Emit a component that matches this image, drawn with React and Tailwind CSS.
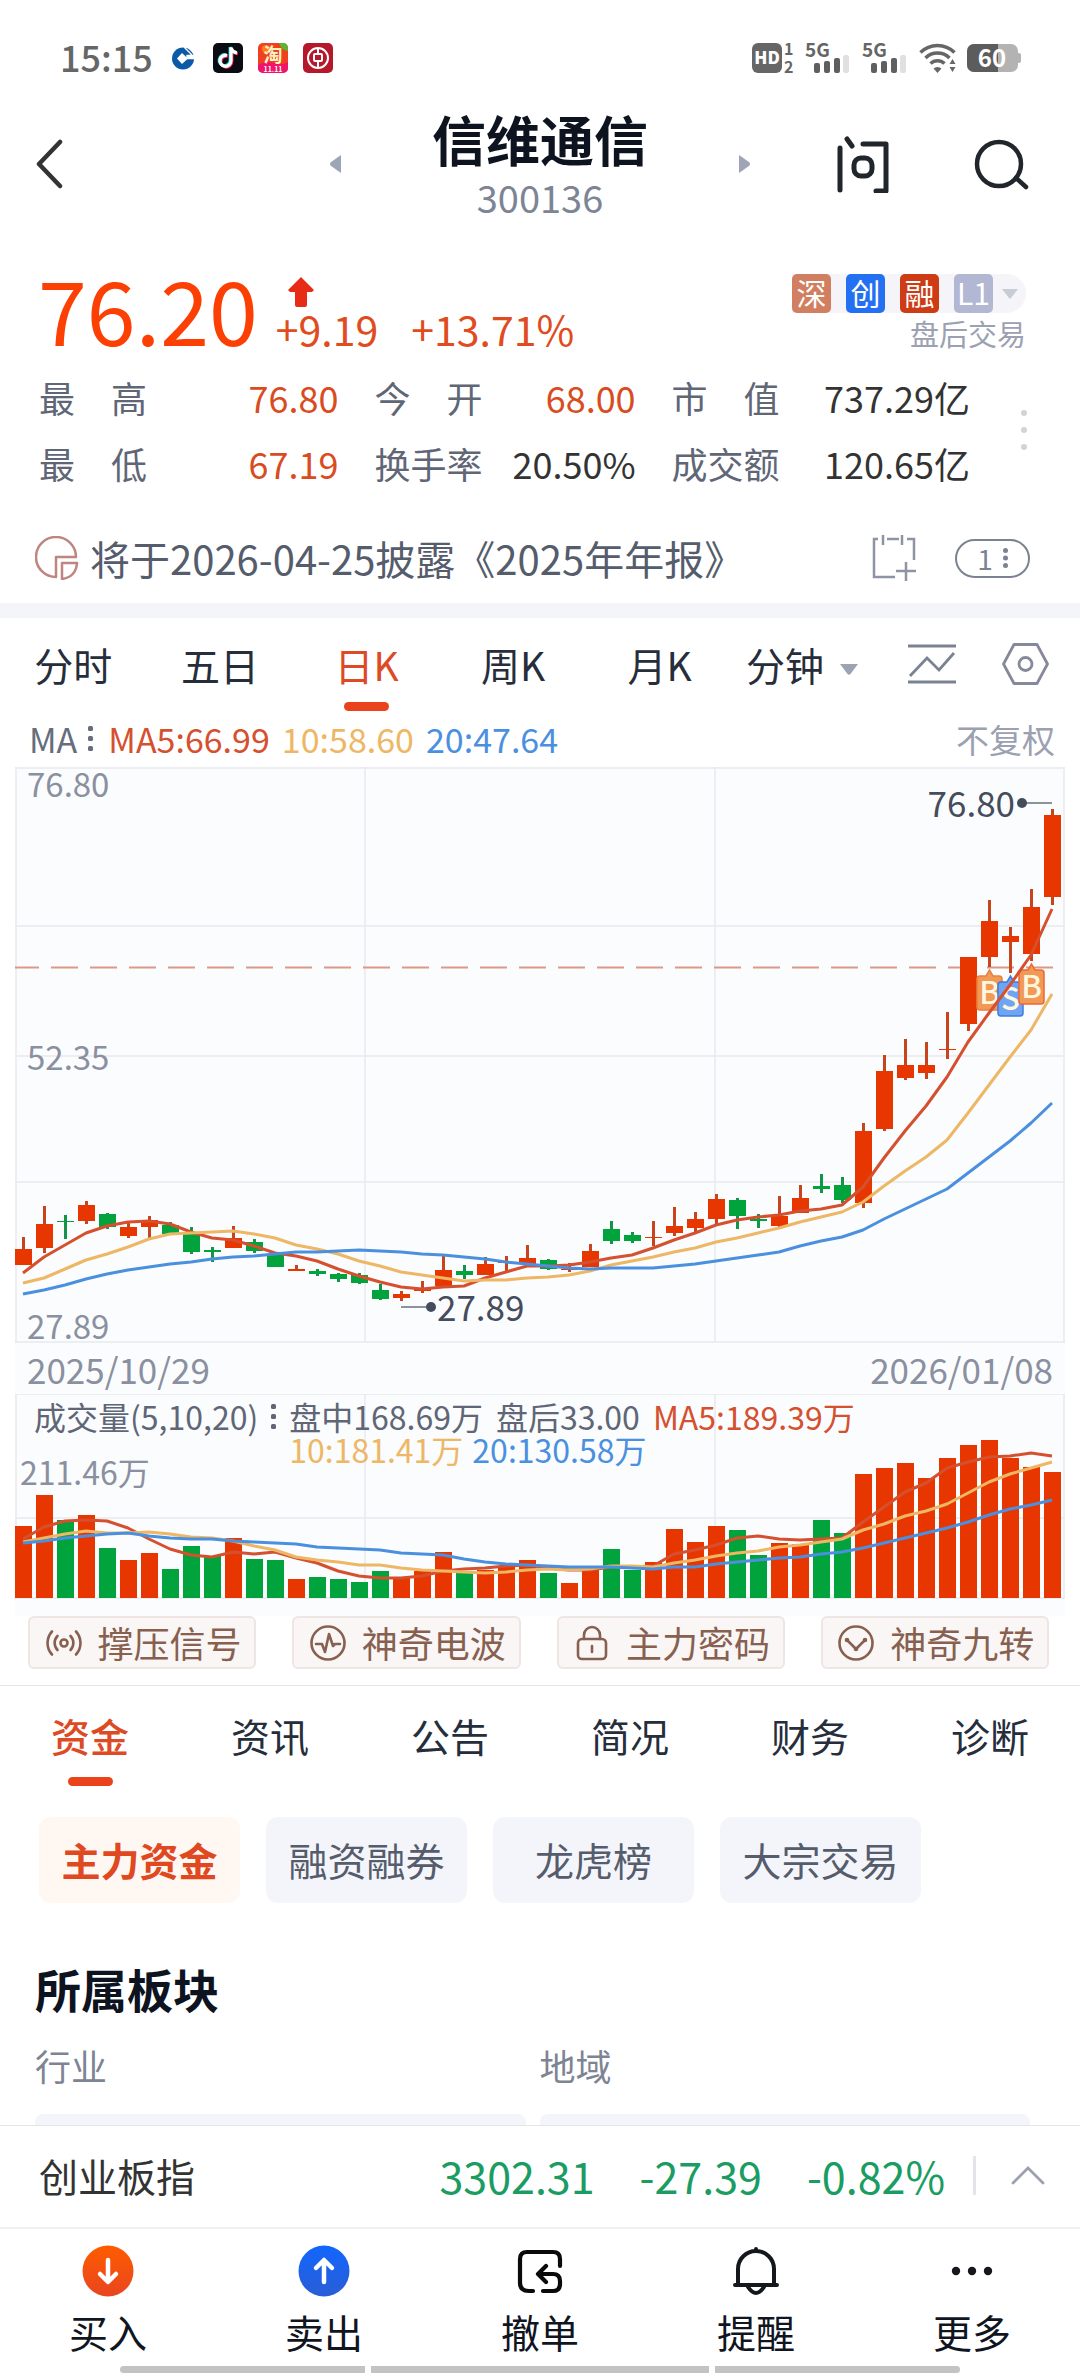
import React from "react";

const RED = "#e83600";
const GREEN = "#00a33c";
const STEP = 21;
const BODY = 17;

// One row per trading day: [rising, high, bodyTop, bodyBottom, low, volumeTop]
const DAYS = [
  [1, 470, 482, 498, 498, 132], [1, 439, 457, 481, 486, 101], [0, 448, 454, 455, 472, 126],
  [1, 434, 438, 454, 457, 121], [0, 446, 447, 460, 462, 154], [1, 455, 460, 469, 471, 166],
  [1, 449, 453, 460, 471, 159], [0, 455, 458, 467, 467, 175], [0, 460, 467, 485, 487, 152],
  [0, 480, 483, 485, 495, 162], [1, 459, 471, 481, 481, 144], [0, 472, 475, 484, 486, 165],
  [0, 487, 488, 500, 500, 166], [1, 498, 502, 504, 504, 185], [0, 502, 504, 507, 509, 183],
  [0, 506, 507, 512, 515, 185], [0, 506, 508, 516, 517, 188], [0, 517, 523, 532, 533, 177],
  [1, 524, 527, 531, 534, 184], [1, 514, 522, 524, 526, 177], [1, 489, 503, 519, 520, 158],
  [0, 498, 504, 508, 512, 179], [1, 490, 497, 508, 508, 176], [1, 489, 495, 496, 504, 173],
  [1, 478, 491, 497, 497, 166], [0, 492, 493, 502, 503, 179], [1, 496, 502, 503, 505, 189],
  [1, 477, 484, 500, 500, 176], [0, 454, 462, 474, 477, 155], [0, 465, 468, 474, 476, 176],
  [1, 454, 470, 471, 479, 168], [1, 440, 459, 466, 469, 135], [1, 445, 452, 461, 466, 148],
  [1, 427, 432, 452, 458, 132], [0, 431, 433, 449, 462, 136], [0, 447, 452, 454, 461, 161],
  [1, 429, 449, 459, 460, 149], [1, 418, 431, 446, 446, 150], [0, 407, 419, 422, 426, 126],
  [0, 410, 418, 433, 436, 139], [1, 356, 364, 436, 441, 80], [1, 288, 304, 362, 364, 74],
  [1, 272, 298, 311, 313, 69], [1, 275, 298, 306, 312, 84], [1, 245, 282, 283, 292, 64],
  [1, 190, 190, 257, 264, 51], [1, 133, 154, 190, 200, 46], [1, 160, 169, 175, 206, 64],
  [1, 122, 140, 187, 194, 73], [1, 42, 48, 130, 138, 78],
];

const PRICE_MA = {
  ma5: [506, 490, 478, 466, 459, 455, 454, 457, 465, 471, 473, 479, 486, 489, 494, 502, 509, 515, 520, 522, 520, 519, 511, 505, 499, 499, 498, 495, 491, 488, 481, 473, 466, 458, 453, 450, 448, 444, 442, 438, 420, 391, 364, 339, 310, 275, 246, 218, 188, 142],
  ma10: [516, 511, 502, 493, 487, 480, 472, 467, 466, 465, 464, 467, 471, 478, 482, 487, 494, 499, 505, 508, 511, 514, 513, 513, 511, 510, 508, 504, 498, 494, 490, 485, 481, 475, 471, 466, 461, 455, 450, 445, 435, 419, 404, 390, 373, 346, 318, 290, 263, 227],
  ma20: [527, 523, 518, 512, 507, 503, 500, 497, 495, 492, 490, 489, 487, 485, 485, 484, 483, 484, 485, 487, 488, 490, 492, 495, 497, 499, 501, 502, 501, 501, 501, 499, 497, 494, 491, 488, 485, 479, 474, 470, 463, 452, 442, 432, 422, 406, 390, 374, 356, 336],
};

const VOLUME_MA = {
  ma5: [145, 133, 127, 126, 127, 134, 145, 155, 161, 163, 158, 160, 158, 164, 169, 177, 182, 184, 184, 182, 177, 175, 174, 172, 171, 174, 176, 176, 173, 173, 172, 160, 156, 151, 144, 142, 145, 146, 145, 144, 128, 113, 98, 89, 74, 68, 63, 62, 59, 62],
  ma10: [148, 144, 140, 137, 139, 139, 138, 140, 143, 144, 147, 152, 156, 163, 166, 168, 171, 171, 174, 176, 177, 178, 179, 178, 176, 175, 176, 175, 172, 172, 173, 169, 166, 162, 159, 157, 153, 151, 148, 145, 136, 130, 122, 117, 110, 99, 88, 80, 74, 68],
  ma20: [149, 147, 144, 142, 140, 139, 142, 144, 145, 145, 147, 148, 149, 150, 153, 154, 155, 156, 159, 160, 161, 165, 168, 170, 171, 172, 173, 173, 173, 174, 175, 173, 173, 170, 168, 166, 164, 163, 160, 158, 154, 149, 144, 139, 134, 128, 121, 115, 111, 106],
};

function AverageLines({ data }) {
  const path = (ys) => ys.map((y, i) => `${8 + i * STEP},${y}`).join(" ");
  return (
    <g fill="none" strokeWidth="3" strokeLinejoin="round">
      <polyline points={path(data.ma5)} stroke="#d5502f" />
      <polyline points={path(data.ma10)} stroke="#edb765" />
      <polyline points={path(data.ma20)} stroke="#4a90df" />
    </g>
  );
}

function TradeMark({ x, y, letter, fill, edge }) {
  return (
    <g>
      <path d={`M${x + 3} ${y}h6l3.5-6 3.5 6h6a3 3 0 0 1 3 3v28a3 3 0 0 1-3 3h-19a3 3 0 0 1-3-3v-28a3 3 0 0 1 3-3z`} fill={fill} stroke={edge} strokeWidth="1.5" />
      <text x={x + 12.5} y={y + 28} fontSize="31" fontWeight="500" fill="#fff6df" textAnchor="middle">{letter}</text>
    </g>
  );
}

function PriceChart() {
  return (
    <svg viewBox="0 0 1050 576" className="block w-full bg-[#fbfcfe]" role="img" aria-label="日K线图">
      <g stroke="#e8eaee" strokeWidth="1.5">
        {[1, 159, 289, 415, 575].map((y) => <line key={y} x1="0" x2="1050" y1={y} y2={y} />)}
        {[1, 350, 700, 1049].map((x) => <line key={x} x1={x} x2={x} y1="0" y2="576" />)}
      </g>
      <line x1="-3" x2="1038" y1="200.5" y2="200.5" stroke="#dc9a84" strokeWidth="2" strokeDasharray="27 12" />
      <g fontSize="33" fill="#8a90a0">
        <text x="12" y="30">76.80</text>
        <text x="12" y="303">52.35</text>
        <text x="12" y="572">27.89</text>
      </g>
      {DAYS.map(([up, high, top, bottom, low], i) => (
        <g key={i} fill={up ? RED : GREEN}>
          <rect x={i * STEP + 7} y={high} width="3" height={low - high} fill={up ? "#c8441c" : "#149448"} />
          <rect x={i * STEP} y={top} width={BODY} height={bottom - top} />
        </g>
      ))}
      <TradeMark x={962} y={209} letter="B" fill="#f09a56" edge="#e8813e" />
      <TradeMark x={983} y={215} letter="S" fill="#6fa4f5" edge="#3f7bdd" />
      <TradeMark x={1004} y={203} letter="B" fill="#f09a56" edge="#ec6a35" />
      <AverageLines data={PRICE_MA} />
      <g fill="#454c5c" fontSize="35">
        <line x1="1007" x2="1037" y1="36" y2="36" stroke="#8d929c" strokeWidth="2" />
        <circle cx="1007" cy="36" r="5" />
        <text x="1000" y="50" textAnchor="end">76.80</text>
        <line x1="386" x2="415" y1="540" y2="540" stroke="#8d929c" strokeWidth="2" />
        <circle cx="416" cy="540" r="5" />
        <text x="422" y="554">27.89</text>
      </g>
    </svg>
  );
}

function VolumeChart() {
  return (
    <svg viewBox="0 0 1050 222" className="block w-full bg-[#fbfcfe]" role="img" aria-label="成交量图">
      <g stroke="#e8eaee" strokeWidth="1.5">
        {[0, 124, 204].map((y) => <line key={y} x1="0" x2="1050" y1={y} y2={y} />)}
        {[1, 350, 700, 1049].map((x) => <line key={x} x1={x} x2={x} y1="0" y2="204" />)}
      </g>
      <text x="5" y="91" fontSize="32" fill="#8a90a0">211.46万</text>
      {DAYS.map((d, i) => (
        <rect key={i} x={i * STEP} y={d[5]} width={BODY} height={204 - d[5]} fill={d[0] ? RED : GREEN} />
      ))}
      <AverageLines data={VOLUME_MA} />
    </svg>
  );
}

function Dots({ className = "" }) {
  return (
    <svg viewBox="0 0 6 26" className={`h-[26px] w-[6px] shrink-0 ${className}`} fill="currentColor" aria-hidden="true">
      <rect y="0" width="5" height="5" rx="1.5" /><rect y="10" width="5" height="5" rx="1.5" /><rect y="20" width="5" height="5" rx="1.5" />
    </svg>
  );
}

function Signal() {
  return (
    <svg viewBox="0 0 46 34" className="h-[34px] w-[46px] overflow-visible" aria-hidden="true">
      <text x="0" y="16" fontSize="19" fontWeight="700" fill="#666">5G</text>
      <g fill="#5f5f5f">
        <rect x="9" y="22" width="6" height="10" rx="2" />
        <rect x="19" y="20" width="6" height="12" rx="2" />
        <rect x="29" y="17" width="6" height="15" rx="2" />
      </g>
      <rect x="38" y="14" width="6" height="18" rx="2" fill="#e0e0e0" />
    </svg>
  );
}

function StatusBar() {
  return (
    <div className="flex items-center justify-between pt-[39px] pr-[58px] pl-[60px]">
      <div className="flex items-center">
        <span className="mr-[18px] pb-[4px] text-[36px] leading-[34px] font-medium text-[#666]">15:15</span>
        <svg viewBox="0 0 24 24" className="h-[24px] w-[24px]" aria-hidden="true">
          <circle cx="12" cy="12.500" r="11" fill="#0a5aa8" />
          <path d="M11 7l6 5.500-6 5.500-5-5.500z" fill="#fff" />
          <path d="M16 12.500h8v-3h-8zM13 1l8 8M16 0l8 8" stroke="#fff" strokeWidth="1.300" fill="#fff" />
        </svg>
        <svg viewBox="0 0 30 30" className="ml-[18px] h-[30px] w-[30px]" aria-hidden="true">
          <rect width="30" height="30" rx="5" fill="#0b0b14" />
          <g fill="none" strokeWidth="3.200">
            <path d="M14 12.500a5.500 5.500 0 1 0 4 5.300V4.500c.5 3 2.500 5 6 5.300" stroke="#fb3158" transform="translate(.8 .8)" />
            <path d="M14 12.500a5.500 5.500 0 1 0 4 5.300V4.500c.5 3 2.500 5 6 5.300" stroke="#27e5e6" transform="translate(-.8 -.6)" />
            <path d="M14 12.500a5.500 5.500 0 1 0 4 5.300V4.500c.5 3 2.500 5 6 5.300" stroke="#fff" />
          </g>
        </svg>
        <svg viewBox="0 0 30 30" className="ml-[15px] h-[30px] w-[30px] overflow-visible" aria-hidden="true">
          <rect width="30" height="30" rx="5" fill="#f0401f" />
          <circle cx="8" cy="6" r="4" fill="#ff7a1c" />
          <path d="M21 0h4a5 5 0 0 1 5 5v3q-7-1-9-8z" fill="#5cb531" />
          <path d="M0 22q8-5 16-2t14-1v6a5 5 0 0 1-5 5H5a5 5 0 0 1-5-5z" fill="#f0146a" />
          <text x="15" y="19" fontSize="19" fontWeight="700" fill="#fff3c4" textAnchor="middle">淘</text>
          <text x="15" y="29" fontSize="7" fontWeight="700" fill="#fff" textAnchor="middle">11.11</text>
        </svg>
        <svg viewBox="0 0 30 30" className="ml-[15px] h-[30px] w-[30px]" aria-hidden="true">
          <rect width="30" height="30" rx="5" fill="#b5182a" />
          <g fill="none" stroke="#fff" strokeWidth="2">
            <circle cx="15" cy="15" r="10" />
            <rect x="11" y="11" width="8" height="7" rx="1" />
            <path d="M15 5v6M15 18v7" />
          </g>
        </svg>
      </div>
      <div className="flex items-center">
        <svg viewBox="0 0 43 32" className="h-[32px] w-[43px] overflow-visible" aria-hidden="true">
          <rect y="1" width="30" height="30" rx="6" fill="#666" />
          <text x="15" y="22" fontSize="17" fontWeight="900" fill="#fff" textAnchor="middle">HD</text>
          <text x="32" y="13" fontSize="16" fontWeight="700" fill="#666">1</text>
          <text x="32" y="31" fontSize="16" fontWeight="700" fill="#666">2</text>
        </svg>
        <span className="ml-[10px] flex gap-[11px]"><Signal /><Signal /></span>
        <svg viewBox="0 0 38 30" className="ml-[11px] h-[30px] w-[38px]" aria-hidden="true">
          <g fill="none" stroke="#666" strokeWidth="3.500">
            <path d="M1.500 9.500a24 24 0 0 1 34 0" />
            <path d="M6.500 15a17 17 0 0 1 24 0" />
            <path d="M11.500 20.500a10 10 0 0 1 14 0" />
          </g>
          <path d="M18.500 30l-4-4.500a6 6 0 0 1 8 0z" fill="#666" />
          <path d="M30.500 21l3-5 3 5zM30.500 24l3 5 3-5z" fill="#666" />
        </svg>
        <svg viewBox="0 0 55 28" className="ml-[10px] h-[28px] w-[55px] overflow-visible" aria-hidden="true">
          <rect width="51" height="28" rx="7" fill="#b3b3b3" />
          <path d="M7 0h24v28H7a7 7 0 0 1-7-7V7a7 7 0 0 1 7-7z" fill="#5c5c5c" />
          <rect x="50" y="9" width="4" height="10" rx="2" fill="#b3b3b3" />
          <text x="25" y="23" fontSize="24" fontWeight="700" fill="#fff" textAnchor="middle">60</text>
        </svg>
      </div>
    </div>
  );
}

function Header() {
  return (
    <header className="grid grid-cols-[1fr_auto_1fr] items-center px-[34px] pt-[32px]">
      <button aria-label="返回" className="justify-self-start">
        <svg viewBox="0 0 30 50" className="h-[50px] w-[30px]" fill="none" stroke="#333" strokeWidth="4.500" strokeLinecap="round" strokeLinejoin="round">
          <path d="M26 3L5 25l21 22" />
        </svg>
      </button>
      <div className="flex items-center gap-[91px]">
        <button aria-label="上一只">
          <svg viewBox="0 0 11 18" className="h-[18px] w-[11px]" fill="#9ea6b6"><path d="M11 0v18L1 11q-2-2 0-4z" /></svg>
        </button>
        <div className="text-center">
          <h1 className="text-[54px] leading-[60px] font-bold text-[#0d131f]">信维通信</h1>
          <p className="mt-[6px] text-[38px] leading-[44px] text-[#7d8494]">300136</p>
        </div>
        <button aria-label="下一只">
          <svg viewBox="0 0 11 18" className="h-[18px] w-[11px]" fill="#9ea6b6"><path d="M0 0v18l10-7q2-2 0-4z" /></svg>
        </button>
      </div>
      <div className="flex items-center gap-[84px] justify-self-end pr-[16px]">
        <button aria-label="问">
          <svg viewBox="0 0 54 58" className="h-[58px] w-[54px]" fill="none" stroke="#20262c" strokeWidth="5" strokeLinecap="round" strokeLinejoin="round">
            <path d="M4 13v42M11 4l5 7M27 9h23v47H40" />
            <rect x="18" y="23" width="18" height="18" rx="7" />
          </svg>
        </button>
        <button aria-label="搜索">
          <svg viewBox="0 0 56 52" className="h-[52px] w-[56px]" fill="none" stroke="#20262c" strokeWidth="4.500" strokeLinecap="round">
            <circle cx="25" cy="26" r="22" /><path d="M42 40l10 9" />
          </svg>
        </button>
      </div>
    </header>
  );
}

const BADGES = [
  ["深", "bg-[#d17f60]"],
  ["创", "bg-[#2470f2]"],
  ["融", "bg-[#cd3c14]"],
  ["L1", "bg-[#b2b8d3]"],
];

function Quote() {
  return (
    <section className="flex items-end justify-between pt-[45px] pr-[54px] pl-[38px]">
      <div className="flex items-end text-[#e04b20]">
        <strong className="text-[88px] leading-[88px] font-normal text-[#fc4003]">76.20</strong>
        <div className="mb-[3px] ml-[18px]">
          <svg viewBox="0 0 26 30" className="ml-[12px] h-[30px] w-[26px]" fill="#e62c16" aria-hidden="true"><path d="M13 0l13 13-2 2h-5v13q0 2-2 2H9q-2 0-2-2V15H2l-2-2z" /></svg>
          <p className="flex gap-[33px] text-[41px] leading-[42px]"><span>+9.19</span><span>+13.71%</span></p>
        </div>
      </div>
      <div className="mb-px flex flex-col items-end">
        <button className="flex items-center rounded-r-full bg-[#f5f5f9]" aria-label="标签">
          {BADGES.map(([t, bg]) => (
            <span key={t} className="flex pr-[15px] last-of-type:pr-[9px]">
              <span className={`block h-[39px] w-[39px] rounded-[5px] text-center text-[30px] leading-[36px] text-white ${bg}`}>{t}</span>
            </span>
          ))}
          <svg viewBox="0 0 16 10" className="mr-[8px] h-[10px] w-[16px]" fill="#c8ccd5" aria-hidden="true"><path d="M0 0h16L9 9q-1 1-2 0z" /></svg>
        </button>
        <a href="#after-hours" className="mt-[2px] text-[29px] leading-[36px] text-[#9ba1b1]">盘后交易</a>
      </div>
    </section>
  );
}

const STATS = [
  ["最　高", "76.80", "text-[#d94c22]"], ["今　开", "68.00", "text-[#d94c22]"], ["市　值", "737.29亿", "text-[#333]"],
  ["最　低", "67.19", "text-[#d94c22]"], ["换手率", "20.50%", "text-[#333]"], ["成交额", "120.65亿", "text-[#333]"],
];

function Stats() {
  return (
    <section className="mt-[12px] flex items-center justify-between pr-[53px] pl-[39px]">
      <dl className="grid grow grid-cols-[298fr_260fr_297fr] gap-x-[36px] pr-[51px] text-[36px] leading-[66px]">
        {STATS.map(([label, value, tone]) => (
          <div key={label} className="flex justify-between whitespace-nowrap">
            <dt className="text-[#5f6676]">{label}</dt>
            <dd className={tone}>{value}</dd>
          </div>
        ))}
      </dl>
      <button aria-label="更多行情">
        <svg viewBox="0 0 6 40" className="h-[40px] w-[6px]" fill="#cfd3db"><circle cx="3" cy="3" r="3" /><circle cx="3" cy="20" r="3" /><circle cx="3" cy="37" r="3" /></svg>
      </button>
    </section>
  );
}

function Notice() {
  return (
    <section className="flex items-center pt-[39px] pr-[50px] pb-[22px] pl-[35px]">
      <svg viewBox="0 0 44 44" className="h-[44px] w-[44px]" fill="none" stroke="#bf8581" strokeWidth="2.500" strokeLinejoin="round" aria-hidden="true">
        <path d="M21 21h20A20 20 0 1 0 21 41z" /><path d="M27 27h15q-1 14-15 16z" />
      </svg>
      <a href="#report" className="ml-[11px] grow text-[40px] leading-[44px] text-[#555c6c]">将于2026-04-25披露《2025年年报》</a>
      <button aria-label="加入日历">
        <svg viewBox="0 0 46 46" className="h-[46px] w-[46px]" fill="none" stroke="#8e94a4" strokeWidth="2.500">
          <path d="M7 4H3v38h21M12 0v10M16 4h12M31 0v10M36 4h7v21M35 27v19M25 36h20" />
        </svg>
      </button>
      <button aria-label="公告数量" className="ml-[38px] flex h-[39px] w-[75px] items-center justify-center gap-[10px] rounded-full border-2 border-[#7b8292] text-[28px] leading-[32px] text-[#7b8292]">
        <span>1</span>
        <svg viewBox="0 0 5 20" className="h-[20px] w-[5px]" fill="currentColor"><circle cx="2.500" cy="2.500" r="2.500" /><circle cx="2.500" cy="10" r="2.500" /><circle cx="2.500" cy="17.500" r="2.500" /></svg>
      </button>
    </section>
  );
}

function PeriodTabs() {
  return (
    <nav className="flex items-start pt-[18px] pr-[31px] text-[39px] leading-[56px] text-[#262d3b]">
      <div className="grid grow grid-cols-5">
        {["分时", "五日", "日K", "周K", "月K"].map((t) => {
          const active = t === "日K";
          return (
            <button key={t} aria-pressed={active} className={active ? "flex flex-col items-center text-[#dd4a24]" : "flex flex-col items-center"}>
              {t}
              {active && <span className="mt-[10px] h-[9px] w-[45px] rounded-full bg-[#ea431b]" />}
            </button>
          );
        })}
      </div>
      <button className="ml-[13px] flex items-center gap-[16px]">
        分钟
        <svg viewBox="0 0 18 11" className="mt-[10px] h-[11px] w-[18px]" fill="#9da3b4" aria-hidden="true"><path d="M0 0h18l-7.500 10q-1.500 1.500-3 0z" /></svg>
      </button>
      <button aria-label="画线" className="ml-[50px] flex h-[56px] items-center">
        <svg viewBox="0 0 48 40" className="h-[40px] w-[48px]" fill="none" stroke="#7b8292" strokeWidth="2.800">
          <path d="M0 2h48M0 38h48M2 32L19 14l12 12L46 9" />
        </svg>
      </button>
      <button aria-label="设置" className="ml-[46px] flex h-[56px] items-center">
        <svg viewBox="0 0 47 42" className="h-[42px] w-[47px]" fill="none" stroke="#85899a" strokeWidth="2.800" strokeLinejoin="round">
          <path d="M12 1.500h23L45.500 21 35 40.500H12L1.500 21z" /><circle cx="23.500" cy="21" r="6.500" />
        </svg>
      </button>
    </nav>
  );
}

function ChartArea() {
  return (
    <section className="px-[15px]">
      <div className="flex items-center py-[8px] pr-[10px] pl-[14px] text-[34px] leading-[40px]">
        <button className="flex items-center text-[#666d7c]">MA<Dots className="mr-[14px] ml-[11px]" /></button>
        <div className="flex grow gap-[12px]">
          <span className="text-[#d5502f]">MA5:66.99</span>
          <span className="text-[#edb765]">10:58.60</span>
          <span className="text-[#4a90df]">20:47.64</span>
        </div>
        <button className="text-[33px] text-[#9ba1b1]">不复权</button>
      </div>
      <PriceChart />
      <div className="flex justify-between bg-[#fbfcfe] px-[12px] text-[35px] leading-[51px] text-[#8a90a0]">
        <span>2025/10/29</span>
        <span>2026/01/08</span>
      </div>
      <div className="relative">
        <VolumeChart />
        <div className="absolute top-[6px] left-[19px] flex items-start text-[32px] leading-[33px] text-[#5f6676]">
          <button className="flex items-center whitespace-nowrap">成交量(5,10,20)<Dots className="mr-[12px] ml-[13px]" /></button>
          <div className="whitespace-nowrap">
            <p className="flex gap-[13px]"><span>盘中168.69万</span><span>盘后33.00</span><span className="text-[#d5502f]">MA5:189.39万</span></p>
            <p className="flex gap-[9px] text-[#edb765]"><span>10:181.41万</span><span className="text-[#4a90df]">20:130.58万</span></p>
          </div>
        </div>
      </div>
    </section>
  );
}

const SIGNALS = [
  ["撑压信号", <g key="a"><circle cx="18" cy="18" r="3.500" /><path d="M11.500 11a10 10 0 0 0 0 14M24.500 11a10 10 0 0 1 0 14M6 6.500a17 17 0 0 0 0 23M30 6.500a17 17 0 0 1 0 23" /></g>],
  ["神奇电波", <g key="b"><circle cx="18" cy="18" r="16.500" /><path d="M6 19h6l3 8 4-18 4 12 2-2h5" /></g>],
  ["主力密码", <g key="c"><rect x="4" y="14" width="28" height="20" rx="4" /><path d="M10 14v-4a8 8 0 0 1 16 0v4M18 21v6" /></g>],
  ["神奇九转", <g key="d"><circle cx="18" cy="18" r="16.500" /><path d="M9 15l9 9 9-9" /><circle cx="9" cy="15" r="1" /><circle cx="18" cy="24" r="1" /><circle cx="27" cy="15" r="1" /></g>],
];

function SignalButtons() {
  return (
    <div className="grid grid-cols-4 gap-[36px] border-b border-[#e3e5e9] pr-[31px] pb-[16px] pl-[28px]">
      {SIGNALS.map(([label, icon]) => (
        <button key={label} className="flex items-center justify-center gap-[16px] rounded-[6px] border-2 border-[#efe6e4] bg-[#f9f6f5] pl-[3px] text-[36px] leading-[49px] whitespace-nowrap text-[#87604f]">
          <svg viewBox="0 0 36 36" className="h-[36px] w-[36px]" fill="none" stroke="currentColor" strokeWidth="2.600" strokeLinecap="round" strokeLinejoin="round" aria-hidden="true">{icon}</svg>
          {label}
        </button>
      ))}
    </div>
  );
}

function Details() {
  return (
    <section>
      <nav className="grid grid-cols-6 items-start pt-[21px] text-[39px] leading-[56px] text-[#262d3b]">
        {["资金", "资讯", "公告", "简况", "财务", "诊断"].map((t, i) => (
          <button key={t} aria-pressed={i === 0} className={i === 0 ? "flex flex-col items-center font-medium text-[#dd4a24]" : "flex flex-col items-center"}>
            {t}
            {i === 0 && <span className="mt-[14px] h-[9px] w-[45px] rounded-full bg-[#ea431b]" />}
          </button>
        ))}
      </nav>
      <div className="mt-[31px] flex gap-[26px] pl-[39px] text-[39px] leading-[46px] text-[#555c6c]">
        {["主力资金", "融资融券", "龙虎榜", "大宗交易"].map((t, i) => (
          <button key={t} aria-pressed={i === 0} className={i === 0 ? "w-[201px] rounded-[12px] bg-[#fff7f2] pt-[19px] pb-[21px] font-bold text-[#e0481f]" : "w-[201px] rounded-[12px] bg-[#f4f5fa] pt-[19px] pb-[21px]"}>{t}</button>
        ))}
      </div>
      <h2 className="mt-[55px] pl-[35px] text-[46px] leading-[60px] font-bold text-[#0d131f]">所属板块</h2>
      <div className="mt-[23px] grid grid-cols-2 gap-[14px] pr-[50px] pl-[35px] text-[36px] leading-[48px] text-[#7d8494]">
        {["行业", "地域"].map((t) => (
          <div key={t}>
            <h3>{t}</h3>
            <div className="mt-[25px] h-[120px] rounded-[8px] bg-[#f4f5fa]" />
          </div>
        ))}
      </div>
    </section>
  );
}

const ACTIONS = [
  ["买入", <g key="b"><defs><linearGradient id="buy" x2="0" y2="1"><stop stopColor="#ff5c00" /><stop offset="1" stopColor="#e94520" /></linearGradient></defs><circle cx="26" cy="26" r="25.500" fill="url(#buy)" /><path d="M26 15v21M18 29l8 8 8-8" fill="none" stroke="#fff" strokeWidth="4.500" /></g>],
  ["卖出", <g key="s"><defs><linearGradient id="sell" x2="0" y2="1"><stop stopColor="#1266fd" /><stop offset="1" stopColor="#2a5dd6" /></linearGradient></defs><circle cx="26" cy="26" r="25.500" fill="url(#sell)" /><path d="M26 37V16M18 23l8-8 8 8" fill="none" stroke="#fff" strokeWidth="4.500" /></g>],
  ["撤单", <path key="c" d="M19 46h-4q-9 0-9-8V14q0-7 7-7h26q7 0 7 7v7M29 46h10q7 0 7-7v-3q0-7-7-7H25M32 21l-8 8 8 8" fill="none" stroke="#0a0a0a" strokeWidth="4.200" />],
  ["提醒", <g key="r" fill="none" stroke="#14181d" strokeWidth="4"><path d="M8 40V24a18 18 0 0 1 36 0v16M5 40h42M26 4v2M18 42q8 12 16 0" /></g>],
  ["更多", <g key="m" fill="#14181d"><circle cx="10" cy="26" r="4.200" /><circle cx="26" cy="26" r="4.200" /><circle cx="42" cy="26" r="4.200" /></g>],
];

function Footer() {
  return (
    <footer className="bg-white">
      <div className="flex items-center border-t border-[#e3e5e9] pt-[20px] pr-[35px] pb-[23px] pl-[39px] text-[39px] leading-[58px]">
        <span className="grow text-[#333]">创业板指</span>
        <div className="flex gap-[45px] text-[43px] text-[#1a9c62]"><span>3302.31</span><span>-27.39</span><span>-0.82%</span></div>
        <span className="ml-[28px] h-[39px] w-[3px] bg-[#e3e5e9]" />
        <button aria-label="展开" className="ml-[35px]">
          <svg viewBox="0 0 34 20" className="h-[20px] w-[34px]" fill="none" stroke="#9ba1b1" strokeWidth="2.800" strokeLinecap="round"><path d="M2 18L17 3l15 15" /></svg>
        </button>
      </div>
      <nav className="grid grid-cols-5 border-t-2 border-[#eff0f2] pt-[16px] text-[39px] leading-[44px] text-[#10151f]">
        {ACTIONS.map(([label, icon]) => (
          <button key={label} className="flex flex-col items-center gap-[12px]">
            <svg viewBox="0 0 52 52" className="h-[52px] w-[52px]" strokeLinecap="round" strokeLinejoin="round" aria-hidden="true">{icon}</svg>
            {label}
          </button>
        ))}
      </nav>
      <div className="mx-[120px] mt-[13px] mb-[3px] grid grid-cols-[245fr_338fr_245fr] gap-[6px]">
        <span className="h-[7px] rounded-l-full bg-[#c3c3c3]" /><span className="h-[7px] bg-[#c3c3c3]" /><span className="h-[7px] rounded-r-full bg-[#c3c3c3]" />
      </div>
    </footer>
  );
}

export default function App() {
  return (
    <div className="flex h-screen flex-col bg-white font-['Noto_Sans_CJK_SC',sans-serif]">
      <main className="min-h-0 flex-1 overflow-hidden">
        <StatusBar />
        <Header />
        <Quote />
        <Stats />
        <Notice />
        <div className="h-[15px] bg-[#f4f5f9]" />
        <PeriodTabs />
        <ChartArea />
        <SignalButtons />
        <Details />
      </main>
      <Footer />
    </div>
  );
}
